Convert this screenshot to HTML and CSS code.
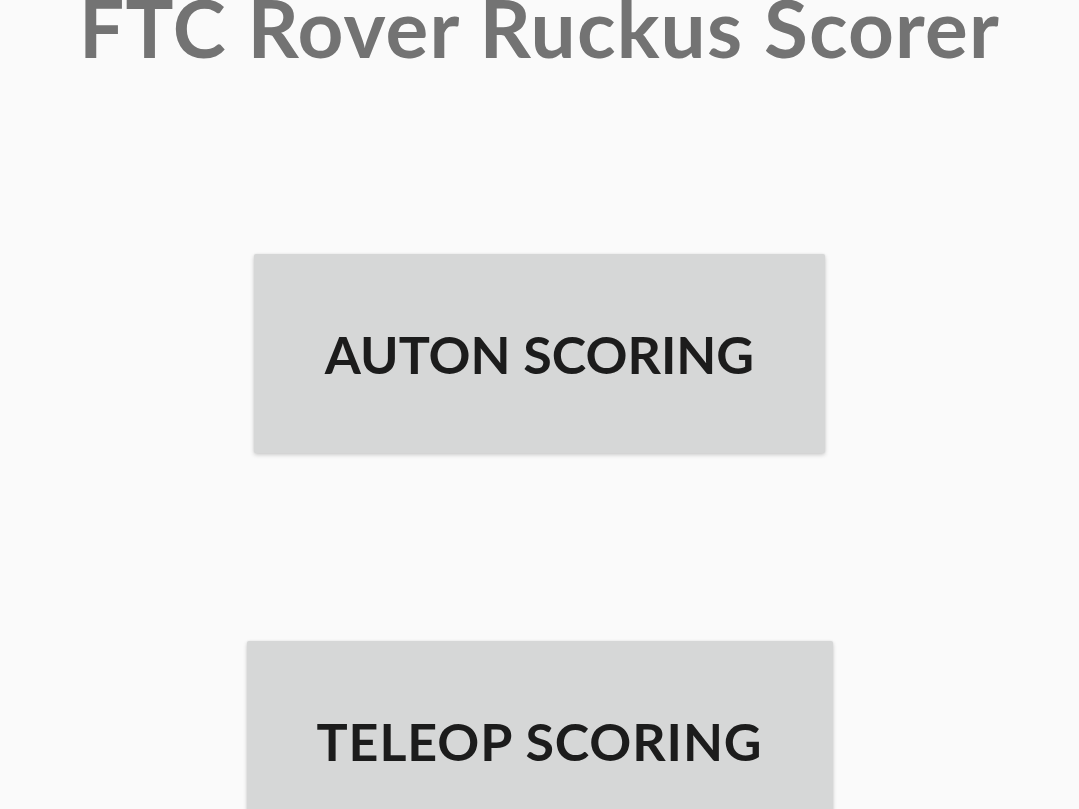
FILE: index.html
```html
<!DOCTYPE html>
<html>
<head>
<meta charset="utf-8">
<link rel="stylesheet" href="styles.css">
</head>
<body>
<main class="screen">
  <h1 class="title">FTC Rover Ruckus Scorer</h1>
  <button class="btn btn-auton">AUTON SCORING</button>
  <button class="btn btn-teleop">TELEOP SCORING</button>
</main>
</body>
</html>
```
FILE: styles.css
```css
html, body {
  margin: 0;
  padding: 0;
  background: #fafafa;
  overflow: hidden;
}
.screen {
  width: 1079px;
  height: 809px;
  display: flex;
  flex-direction: column;
  align-items: center;
  font-family: Lato, "Noto Sans", sans-serif;
}
.title {
  margin: -13px 0 0 0;
  font-size: 80px;
  line-height: 80px;
  font-weight: 700;
  letter-spacing: 1.2px;
  color: #737373;
  white-space: nowrap;
}
.btn {
  border: none;
  background: #d6d7d7;
  color: #1c1c1c;
  font-family: inherit;
  font-size: 52px;
  font-weight: 700;
  height: 199px;
  padding: 0 71px;
  border-radius: 2px;
  box-shadow: 0 2px 4px rgba(0,0,0,0.18), 0 0 2px rgba(0,0,0,0.08);
  flex: none;
}
.btn-auton {
  margin-top: 187px;
}
.btn-teleop {
  margin-top: 188px;
  padding: 0 70px;
  letter-spacing: 0.9px;
}
```
